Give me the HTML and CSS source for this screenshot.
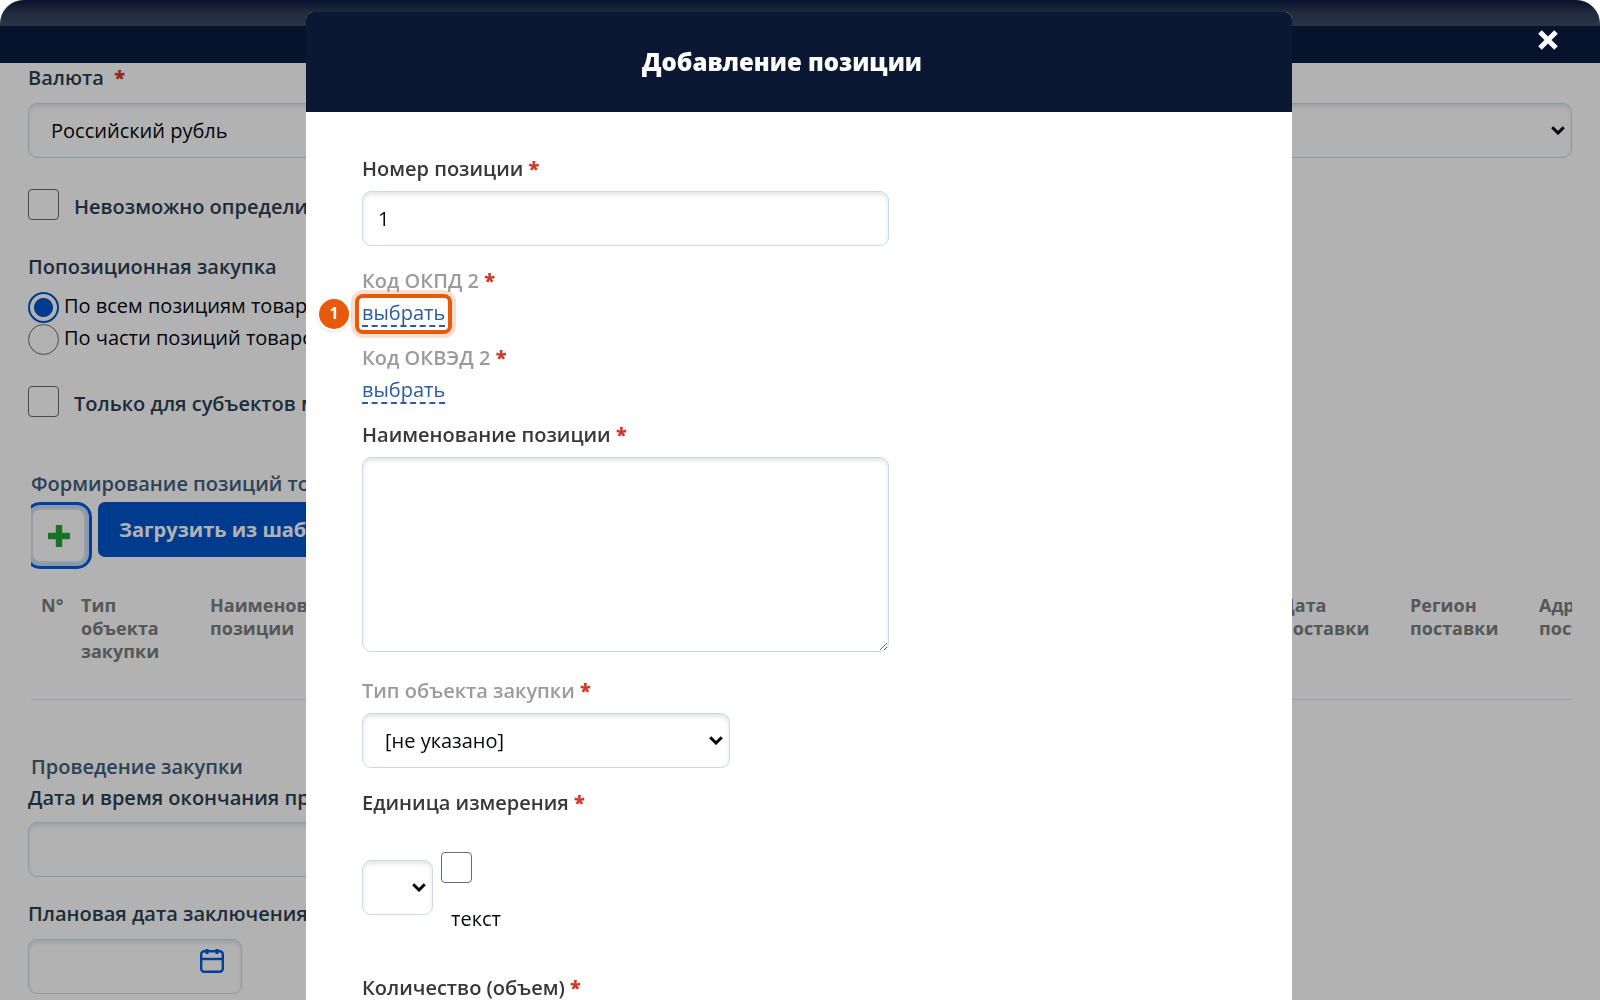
FILE: index.html
```html
<!DOCTYPE html>
<html lang="ru">
<head>
<meta charset="utf-8">
<meta name="viewport" content="width=device-width, initial-scale=1">
<title>Добавление позиции</title>
<link rel="stylesheet" href="styles.css">
</head>
<body>
<div class="page">
  <header class="topbar"></header>
  <main class="form">
    <div class="field">
      <label class="label" for="currency">Валюта &nbsp;<span class="req">*</span></label>
      <select class="control select" id="currency"><option>Российский рубль</option></select>
    </div>
    <div class="check-row first">
      <input class="box" type="checkbox" id="unknown">
      <label class="label" for="unknown">Невозможно определить</label>
    </div>
    <fieldset class="radios">
      <legend class="label">Попозиционная закупка</legend>
      <div class="radio-row"><input class="box round" type="radio" name="scope" id="all" checked><label for="all">По всем позициям товаров</label></div>
      <div class="radio-row"><input class="box round" type="radio" name="scope" id="part"><label for="part">По части позиций товаров</label></div>
    </fieldset>
    <div class="check-row second">
      <input class="box" type="checkbox" id="smb">
      <label class="label" for="smb">Только для субъектов малого</label>
    </div>
    <section class="items">
      <h2 class="section-title">Формирование позиций товаров</h2>
      <div class="toolbar">
        <div class="add-wrap">
          <button class="add" type="button" aria-label="Добавить">
            <svg width="22" height="22" viewBox="0 0 22 22"><path d="M8.500 0h5q.7 0 .7.700V7.800H21.300q.7 0 .7.700v5q0 .7-.7.700H14.200V21.300q0 .7-.7.700h-5q-.7 0-.7-.700V14.200H.700q-.7 0-.7-.700v-5q0-.7.700-.700H7.800V.700q0-.7.700-.700z" fill="#24a63c"/></svg>
          </button>
        </div>
        <button class="upload" type="button">Загрузить из шаблона</button>
      </div>
      <table class="grid">
        <colgroup><col class="c-num"><col class="c-type"><col class="c-name"><col><col class="c-date"><col class="c-date"><col class="c-last"></colgroup>
        <thead><tr><th>N°</th><th>Тип объекта закупки</th><th>Наименование позиции</th><th></th><th>Дата поставки</th><th>Регион поставки</th><th>Адрес поставки</th></tr></thead>
      </table>
    </section>
    <h2 class="section-title">Проведение закупки</h2>
    <div class="field tight">
      <label class="label" for="deadline">Дата и время окончания приема</label>
      <input class="control half" type="text" id="deadline">
    </div>
    <div class="field plan">
      <label class="label" for="plan">Плановая дата заключения</label>
      <div class="date">
        <input class="control" type="text" id="plan">
        <svg class="cal" width="24" height="24" viewBox="0 0 24 24" fill="none" stroke="#005bdf" stroke-width="2.400"><rect x="1.200" y="2.200" width="21.600" height="20.600" rx="3"/><path d="M1 10h22"/><path d="M7 0v5M17 0v5" stroke-width="3"/></svg>
      </div>
    </div>
  </main>
</div>

<div class="overlay">
  <button class="close" type="button" aria-label="Закрыть">
    <svg width="20" height="20" viewBox="0 0 20 20" stroke="#fff" stroke-width="5"><path d="M2 2l16 16M18 2L2 18"/></svg>
  </button>
  <div class="modal" role="dialog" aria-labelledby="dialog-title">
    <div class="modal-head"><h1 id="dialog-title">Добавление позиции</h1></div>
    <form class="modal-body">
      <div class="field">
        <label class="label" for="num">Номер позиции <span class="req">*</span></label>
        <input class="control narrow" type="text" id="num" value="1">
      </div>
      <div class="code">
        <span class="label muted">Код ОКПД 2 <span class="req">*</span></span>
        <div class="hint-anchor"><a class="pick" href="#okpd">выбрать</a><span class="ring"></span><span class="badge">1</span></div>
      </div>
      <div class="code">
        <span class="label muted">Код ОКВЭД 2 <span class="req">*</span></span>
        <a class="pick" href="#okved">выбрать</a>
      </div>
      <div class="field area-field">
        <label class="label" for="name">Наименование позиции <span class="req">*</span></label>
        <textarea class="control narrow area" id="name"></textarea>
      </div>
      <div class="field">
        <label class="label muted" for="type">Тип объекта закупки <span class="req">*</span></label>
        <select class="control select type" id="type"><option>[не указано]</option></select>
      </div>
      <div class="field">
        <label class="label" for="unit">Единица измерения <span class="req">*</span></label>
        <div class="unit">
          <select class="control select mini" id="unit"><option></option></select>
          <div class="text-opt"><input class="box" type="checkbox" id="text"><label for="text">текст</label></div>
        </div>
      </div>
      <div class="field">
        <label class="label" for="qty">Количество (объем) <span class="req">*</span></label>
        <input class="control narrow" type="text" id="qty">
      </div>
    </form>
  </div>
</div>
</body>
</html>
```
FILE: styles.css
```css
* { box-sizing: border-box; }
body {
  margin: 0;
  height: 100vh;
  overflow: hidden;
  background: #fff;
  color: #05080f;
  font: 20px/24px "Open Sans", "Noto Sans", sans-serif;
}
h1, h2 { margin: 0; }
button, input, select, textarea { font: inherit; color: inherit; margin: 0; }

.page { height: 100vh; overflow: hidden; border-radius: 24px 24px 0 0; background: #fff; }
.topbar {
  height: 63px;
  background: linear-gradient(#0b1a40, #303c56 12px, #3c4b68 26px, #0b1a40 26px);
}
.form { padding: 3px 28px 0; }
.label { display: block; font-weight: 600; color: #2c3f54; }
.req { color: #d0392b; font-weight: 800; }
.field { display: flex; flex-direction: column; gap: 10px; }
.form > .field:first-child { gap: 13px; }
.control {
  width: 100%;
  height: 55px;
  padding: 0 15px;
  border: 1px solid #cbd8e7;
  border-radius: 9px;
  background-color: #fff;
  box-shadow: inset 0 3px 4px rgba(0, 0, 0, .1);
  outline: none;
}
.half { width: 50%; }
.select {
  appearance: none;
  padding: 0 22px;
  background-image: url("data:image/svg+xml,%3Csvg xmlns='http://www.w3.org/2000/svg' width='14' height='9' viewBox='0 0 14 9'%3E%3Cpath d='M1.200 1.200L7 7l5.800-5.800' fill='none' stroke='%2305080f' stroke-width='3'/%3E%3C/svg%3E");
  background-repeat: no-repeat;
  background-position: right 6px center;
}
.box {
  appearance: none;
  flex: none;
  width: 31px;
  height: 31px;
  border: 1px solid #6b6b6b;
  border-radius: 4px;
  background: #fff;
}
.round { border-radius: 50%; }
.round:checked { border: 2px solid #0055cc; background: radial-gradient(circle, #0055cc 9px, #fff 10px); }
.check-row { display: flex; gap: 15px; align-items: flex-start; }
.check-row .label { padding-top: 6px; }
.first { margin-top: 31px; }
.second { margin-top: 31px; }
.radios { margin: 35px 0 0; padding: 0; border: 0; }
.radios legend { padding: 0; margin-bottom: 13px; }
.radio-row { display: flex; gap: 5px; }
.radio-row label { padding-top: 2px; }
.radio-row + .radio-row { margin-top: 1px; }
.section-title { padding-left: 3px; font-size: 20px; font-weight: 600; color: #40607d; }

.items { margin-top: 55px; }
.toolbar { display: flex; align-items: flex-start; gap: 6px; margin: 6px 0 25px 3px; }
.add-wrap { padding: 6px 6px 6px 0; overflow: hidden; }
.add {
  display: grid;
  place-items: center;
  width: 55px;
  height: 55px;
  padding: 0;
  border: 2px solid #dbe2ea;
  border-radius: 9px;
  background: #fff;
  box-shadow: 0 0 0 3px #c8dbf7, 0 0 0 6px #005bdf;
}
.upload { height: 55px; padding: 0 21px; border: 0; border-radius: 7px; background: #0055cc; color: #fff; font-weight: 700; }
.grid { width: calc(100% - 3px); margin-left: 3px; table-layout: fixed; border-collapse: collapse; border-bottom: 1px solid #dfe3ee; }
.grid th {
  height: 105px;
  padding: 0 10px;
  vertical-align: top;
  text-align: left;
  font-size: 18px;
  line-height: 23px;
  color: #7b7d80;
  overflow: hidden;
}
.grid th:last-child { padding-right: 0; }
.c-num { width: 40px; }
.c-type, .c-name, .c-date { width: 129px; }
.c-last { width: 43px; }
.items + .section-title { margin-top: 55px; }
.tight { margin-top: 7px; gap: 12px; }
.plan { margin-top: 25px; gap: 13px; }
.date { position: relative; width: 214px; }
.cal { position: absolute; right: 18px; top: 10px; }

.overlay { position: fixed; inset: 0; overflow: hidden; padding: 12px 2px 0 0; background: rgba(0, 0, 0, .3); border-radius: 24px 24px 0 0; }
.close { position: absolute; top: 30px; right: 42px; padding: 0; border: 0; background: none; line-height: 0; }
.modal { width: 90%; max-width: 986px; margin: 0 auto; border-radius: 7px; background: #fff; overflow: hidden; }
.modal-head { height: 100px; padding-right: 34px; display: grid; place-items: center; background: #0a1833; color: #fff; }
.modal-head h1 { font-size: 24px; line-height: 32px; font-weight: 800; }
.modal-body { padding: 45px 56px; display: flex; flex-direction: column; gap: 23px; }
.modal-body .label { color: #383838; }
.modal-body .muted { color: #9b9b9b; }
.modal-body .req { color: #d0392b; }
.narrow { width: 527px; }
.code { display: flex; flex-direction: column; align-items: flex-start; gap: 8px; }
.code + .code, .code + .field { margin-top: -4px; }
.pick { display: block; border-bottom: 2px dashed #2c5aa3; color: #2c5aa3; text-decoration: none; }
.hint-anchor { position: relative; }
.ring { position: absolute; inset: -7px; border: 4px solid #e8590c; border-radius: 8px; box-shadow: 0 0 0 4px rgba(232, 89, 12, .2); }
.badge {
  position: absolute;
  left: -43px;
  top: -2px;
  width: 30px;
  height: 30px;
  border-radius: 50%;
  background: #e8590c;
  box-shadow: 0 0 0 2px #fff, 0 1px 5px rgba(0, 0, 0, .3);
  color: #fff;
  font-size: 16px;
  font-weight: 700;
  line-height: 28px;
  text-align: center;
}
.area { height: 195px; display: block; padding: 15px; }
.area-field { margin-bottom: 4px; }
.type { width: 368px; }
.unit { display: flex; gap: 8px; padding: 27px 0 22px; }
.mini { width: 71px; margin-top: 8px; }
.text-opt { display: flex; flex-direction: column; gap: 24px; }
.text-opt label { padding-left: 10px; }
```
